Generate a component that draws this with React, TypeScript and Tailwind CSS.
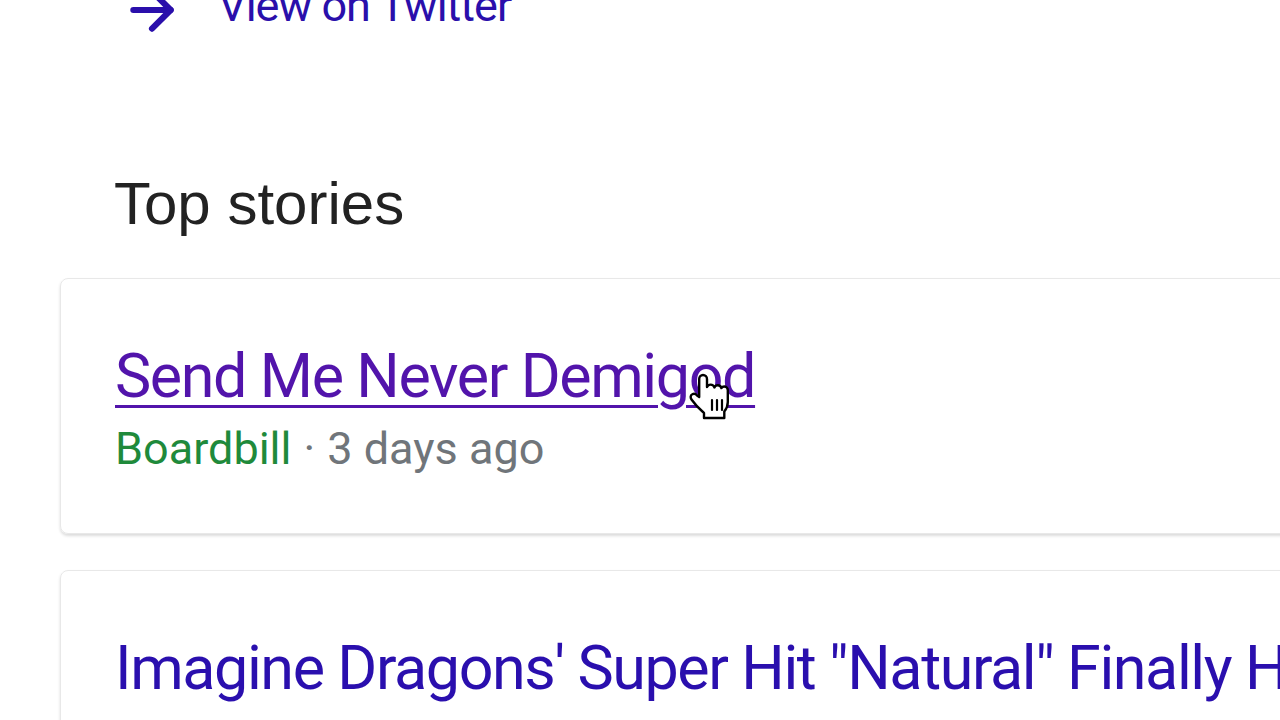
import { ArrowRight } from 'lucide-react';

function HandCursor() {
  return (
    <svg width="48" height="48" viewBox="0 0 48 48" className="absolute left-[685px] top-[372px]">
      <path
        d="M18 3c2.2 0 4 1.8 4 4V15c.6-1.5 2-2.4 3.6-2.4 1.8 0 3.3 1.2 3.8 2.8.6-1.3 1.9-2.1 3.4-2.1 1.8 0 3.2 1.2 3.6 2.8.6-1 1.6-1.6 2.8-1.6 2 0 3.6 1.6 3.6 3.6V30c0 4-1.5 7-3.5 9.5V46H19v-5c-3.5-3-9-8.5-12.5-13.5-1.4-2-1-4.3.8-5.2 1.7-.9 3.6-.3 4.8 1.3l2.1 1.5V7c0-2.2 1.8-4 3.8-4z"
        fill="#fff"
        stroke="#000"
        strokeWidth="2.4"
        strokeLinejoin="round"
      />
      <path d="M27 28v10M32 28v10M37 28v10" stroke="#000" strokeWidth="2.2" strokeLinecap="round" />
    </svg>
  );
}

export default function App() {
  return (
    <div className="relative w-[1280px] h-[720px] overflow-hidden bg-white font-['Roboto',sans-serif]">
      <div className="flex items-center h-[32px] -mt-[6px] pl-[120px]">
        <ArrowRight size={64} strokeWidth={2.3} className="text-[#2a0fab]" />
        <span className="ml-[34px] text-[45px] leading-none tracking-[-1px] text-[#2a0fab] -mt-[10px]">View on Twitter</span>
      </div>

      <h2 className="mt-[148px] pl-[114px] font-['Liberation_Sans',Arial,sans-serif] text-[60px] leading-[60px] text-[#222]">
        Top stories
      </h2>

      <div className="mt-[44px] ml-[60px] w-[1300px] h-[256px] rounded-[8px] border border-[#e8e8e8] shadow-[0_2px_3px_rgba(0,0,0,0.14)] pl-[54px] pt-[62px]">
        <a className="block w-fit text-[61px] leading-[70px] tracking-[-1.4px] text-[#5214ab] underline decoration-[3px] underline-offset-[8px]">
          Send Me Never Demigod
        </a>
        <div className="mt-[12px] text-[45px] leading-[52px] text-[#70757a]">
          <span className="text-[#1f8a3b]">Boardbill</span>
          <span className="mx-[12px]">·</span>3 days ago
        </div>
      </div>

      <div className="mt-[36px] ml-[60px] w-[1300px] h-[256px] rounded-[8px] border border-[#e8e8e8] shadow-[0_2px_3px_rgba(0,0,0,0.14)] pl-[54px] pt-[62px]">
        <a className="block whitespace-nowrap text-[61px] leading-[70px] tracking-[-1.4px] text-[#2a0fae]">
          Imagine Dragons' Super Hit "Natural" Finally Hits No. 1
        </a>
      </div>

      <HandCursor />
    </div>
  );
}
